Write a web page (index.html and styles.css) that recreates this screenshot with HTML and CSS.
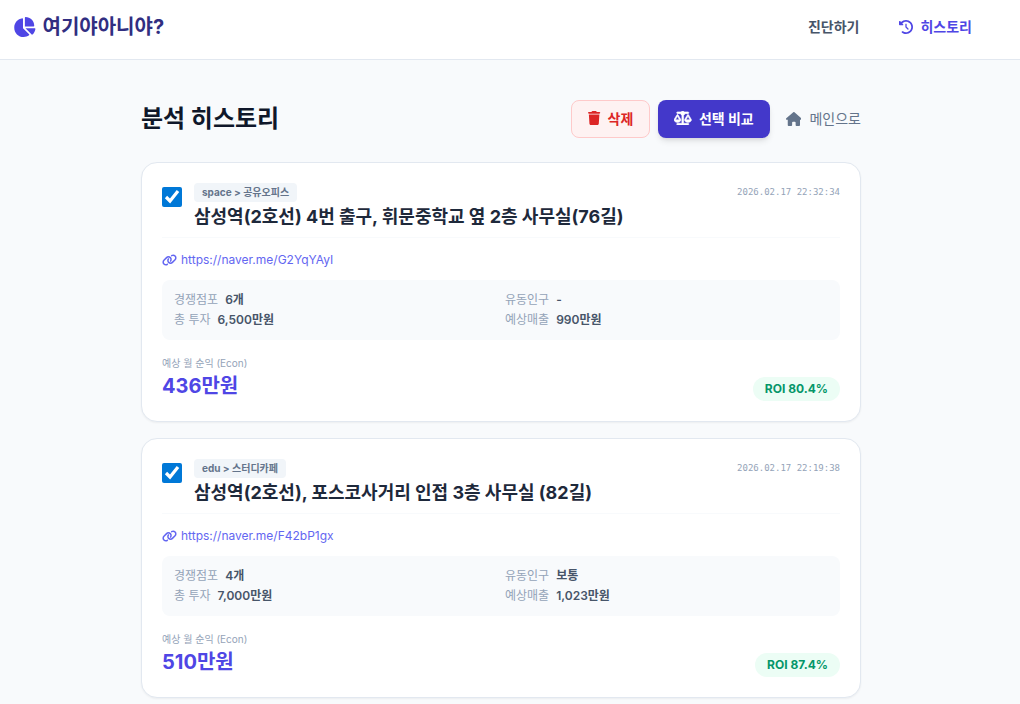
FILE: index.html
```
<!DOCTYPE html>
<html lang="ko">
<head>
    <meta charset="UTF-8">
    <meta name="viewport" content="width=device-width, initial-scale=1.0">
    <title>분석 히스토리 - 여기야아니야?</title>
    <link rel="stylesheet" href="styles.css">
</head>
<body>
    <svg class="sprite" aria-hidden="true">
        <symbol id="icon-link" viewBox="0 0 640 512">
            <path d="M579.8 267.7c56.5-56.5 56.5-148 0-204.5c-50-50-128.8-56.5-186.3-15.4l-1.6 1.1c-14.4 10.3-17.7 30.3-7.4 44.6s30.3 17.7 44.6 7.4l1.6-1.1c32.1-22.9 76-19.3 103.8 8.6c31.5 31.5 31.5 82.5 0 114L422.3 334.8c-31.5 31.5-82.5 31.5-114 0c-27.9-27.9-31.5-71.8-8.6-103.8l1.1-1.6c10.3-14.4 6.9-34.4-7.4-44.6s-34.4-6.9-44.6 7.4l-1.1 1.6C206.5 251.2 213 330 263 380c56.5 56.5 148 56.5 204.5 0L579.8 267.7zM60.2 244.3c-56.5 56.5-56.5 148 0 204.5c50 50 128.8 56.5 186.3 15.4l1.6-1.1c14.4-10.3 17.7-30.3 7.4-44.6s-30.3-17.7-44.6-7.4l-1.6 1.1c-32.1 22.9-76 19.3-103.8-8.6C74 372 74 321 105.5 289.5L217.7 177.2c31.5-31.5 82.5-31.5 114 0c27.9 27.9 31.5 71.8 8.6 103.9l-1.1 1.6c-10.3 14.4-6.9 34.4 7.4 44.6s34.4 6.9 44.6-7.4l1.1-1.6C433.5 260.8 427 182 377 132c-56.5-56.5-148-56.5-204.5 0L60.2 244.3z"/>
        </symbol>
    </svg>

    <header class="header">
        <a class="logo" href="#">
            <svg class="logo-icon" viewBox="0 0 576 512" aria-hidden="true"><path d="M304 240V16.6c0-9 7-16.6 16-16.6C443.7 0 544 100.3 544 224c0 9-7.6 16-16.6 16H304zM32 272C32 150.7 122.1 50.3 239 34.3c9.2-1.3 17 6.1 17 15.4V288L412.5 444.5c6.7 6.7 6.2 17.7-1.5 23.1C371.8 495.6 323.8 512 272 512C139.5 512 32 404.6 32 272zm526.4 16c9.3 0 16.6 7.8 15.4 17c-7.7 55.9-34.6 105.6-73.9 142.3c-6 5.6-15.4 5.2-21.2-.7L320 288H558.4z"/></svg>
            <span>여기야아니야?</span>
        </a>
        <nav class="nav">
            <a class="nav-link" href="#">진단하기</a>
            <a class="nav-link active" href="#">
                <svg class="icon-14" viewBox="0 0 512 512" aria-hidden="true"><path d="M75 75L41 41C25.9 25.9 0 36.6 0 57.9V168c0 13.3 10.7 24 24 24H134.1c21.4 0 32.1-25.9 17-41l-30.8-30.8C155 85.5 203 64 256 64c106 0 192 86 192 192s-86 192-192 192c-40.8 0-78.6-12.7-109.7-34.4c-14.5-10.1-34.4-6.6-44.6 7.9s-6.6 34.4 7.9 44.6C151.2 495 201.7 512 256 512c141.4 0 256-114.6 256-256S397.4 0 256 0C185.3 0 121.3 28.7 75 75zm181 53c-13.3 0-24 10.7-24 24V256c0 6.4 2.5 12.5 7 17l72 72c9.4 9.4 24.6 9.4 33.9 0s9.4-24.6 0-33.9l-65-65V152c0-13.3-10.7-24-24-24z"/></svg>
                히스토리
            </a>
        </nav>
    </header>

    <main class="page">
        <div class="container">
            <div class="toolbar">
                <h1>분석 히스토리</h1>
                <div class="actions">
                    <button class="btn btn-danger" type="button">
                        <svg class="icon-14" viewBox="0 0 448 512" aria-hidden="true"><path d="M135.2 17.7L128 32H32C14.3 32 0 46.3 0 64S14.3 96 32 96H416c17.7 0 32-14.3 32-32s-14.3-32-32-32H320l-7.2-14.3C307.4 6.8 296.3 0 284.2 0H163.8c-12.1 0-23.2 6.8-28.6 17.7zM416 128H32L53.2 467c1.6 25.3 22.6 45 47.9 45H346.9c25.3 0 46.3-19.7 47.9-45L416 128z"/></svg>
                        삭제
                    </button>
                    <button class="btn btn-primary" type="button">
                        <svg class="icon-14 icon-scale" viewBox="0 0 640 512" aria-hidden="true"><path d="M384 32H512c17.7 0 32 14.3 32 32s-14.3 32-32 32H398.4c-5.2 25.8-22.9 47.1-46.4 57.3V448H512c17.7 0 32 14.3 32 32s-14.3 32-32 32H320 128c-17.7 0-32-14.3-32-32s14.3-32 32-32H288V153.3c-23.5-10.3-41.2-31.6-46.4-57.3H128c-17.7 0-32-14.3-32-32s14.3-32 32-32H256c14.6-19.4 37.8-32 64-32s49.4 12.6 64 32zm55.6 288H584.4L512 195.8 439.6 320zM512 416c-62.9 0-115.2-34-126-78.9c-2.6-11 1-22.3 6.7-32.1l95.2-163.2c5-8.6 14.2-13.8 24.1-13.8s19.1 5.3 24.1 13.8l95.2 163.2c5.7 9.8 9.3 21.1 6.7 32.1C627.2 382 574.9 416 512 416zM126.8 195.8L54.4 320H199.3L126.8 195.8zM.9 337.1c-2.6-11 1-22.3 6.7-32.1l95.2-163.2c5-8.6 14.2-13.8 24.1-13.8s19.1 5.3 24.1 13.8l95.2 163.2c5.7 9.8 9.3 21.1 6.7 32.1C242 382 189.7 416 126.8 416S11.7 382 .9 337.1z"/></svg>
                        선택 비교
                    </button>
                    <a class="home-link" href="#">
                        <svg class="icon-14" viewBox="0 0 576 512" aria-hidden="true"><path d="M575.8 255.5c0 18-15 32.1-32 32.1h-32l.7 160.2c0 2.7-.2 5.4-.5 8.1V472c0 22.1-17.9 40-40 40H456c-1.1 0-2.2 0-3.3-.1c-1.4 .1-2.8 .1-4.2 .1H416 392c-22.1 0-40-17.9-40-40V448 384c0-17.7-14.3-32-32-32H256c-17.7 0-32 14.3-32 32v64 24c0 22.1-17.9 40-40 40H160 128.1c-1.5 0-3-.1-4.5-.2c-1.2 .1-2.4 .2-3.6 .2H104c-22.1 0-40-17.9-40-40V360c0-.9 0-1.9 .1-2.8V287.6H32c-18 0-32-14-32-32.1c0-9 3-17 10-24L266.4 8c7-7 15-8 22-8s15 2 21 7L564.8 231.5c8 7 12 15 11 24z"/></svg>
                        메인으로
                    </a>
                </div>
            </div>

            <div class="history-list">
                <article class="card">
                    <div class="card-head">
                        <input class="card-check" type="checkbox" id="item1" checked>
                        <label class="card-label" for="item1">
                            <span class="tag">space &gt; 공유오피스</span>
                            <span class="card-title">삼성역(2호선) 4번 출구, 휘문중학교 옆 2층 사무실(76길)</span>
                        </label>
                        <time class="card-date" datetime="2026-02-17T22:32:34">2026.02.17 22:32:34</time>
                    </div>
                    <a class="card-link" href="#">
                        <svg class="icon-12" aria-hidden="true" viewBox="0 0 640 512"><use href="#icon-link"/></svg>
                        https://naver.me/G2YqYAyI
                    </a>
                    <div class="metrics">
                        <div class="metric"><span>경쟁점포</span><strong>6개</strong></div>
                        <div class="metric"><span>유동인구</span><strong>-</strong></div>
                        <div class="metric"><span>총 투자</span><strong>6,500만원</strong></div>
                        <div class="metric"><span>예상매출</span><strong>990만원</strong></div>
                    </div>
                    <div class="card-foot">
                        <div>
                            <div class="profit-label">예상 월 순익 (Econ)</div>
                            <div class="profit-value">436만원</div>
                        </div>
                        <span class="roi">ROI 80.4%</span>
                    </div>
                </article>

                <article class="card">
                    <div class="card-head">
                        <input class="card-check" type="checkbox" id="item2" checked>
                        <label class="card-label" for="item2">
                            <span class="tag">edu &gt; 스터디카페</span>
                            <span class="card-title">삼성역(2호선), 포스코사거리 인접 3층 사무실 (82길)</span>
                        </label>
                        <time class="card-date" datetime="2026-02-17T22:19:38">2026.02.17 22:19:38</time>
                    </div>
                    <a class="card-link" href="#">
                        <svg class="icon-12" aria-hidden="true" viewBox="0 0 640 512"><use href="#icon-link"/></svg>
                        https://naver.me/F42bP1gx
                    </a>
                    <div class="metrics">
                        <div class="metric"><span>경쟁점포</span><strong>4개</strong></div>
                        <div class="metric"><span>유동인구</span><strong>보통</strong></div>
                        <div class="metric"><span>총 투자</span><strong>7,000만원</strong></div>
                        <div class="metric"><span>예상매출</span><strong>1,023만원</strong></div>
                    </div>
                    <div class="card-foot">
                        <div>
                            <div class="profit-label">예상 월 순익 (Econ)</div>
                            <div class="profit-value">510만원</div>
                        </div>
                        <span class="roi">ROI 87.4%</span>
                    </div>
                </article>
            </div>
        </div>
    </main>
</body>
</html>
```
FILE: styles.css
```
* {
    box-sizing: border-box;
}
body {
    margin: 0;
    font-family: Inter, 'Noto Sans CJK KR', sans-serif;
    background: #f8fafc;
    color: #1e293b;
}
a {
    color: inherit;
    text-decoration: none;
}
svg {
    fill: currentColor;
    flex-shrink: 0;
}
.sprite {
    display: none;
}
.icon-14 {
    height: 14px;
}
.icon-12 {
    height: 12px;
}
.icon-scale {
    stroke: currentColor;
    stroke-width: 20;
}

/* Header */
.header {
    display: flex;
    align-items: center;
    justify-content: space-between;
    height: 60px;
    padding: 0 48px 6px 13px;
    background: white;
    border-bottom: 1px solid #e2e8f0;
}
.logo {
    display: flex;
    align-items: center;
    gap: 7px;
    font-size: 20px;
    font-weight: 700;
    line-height: 28px;
    color: #312e81;
}
.logo-icon {
    height: 20px;
    color: #4f46e5;
}
.nav {
    display: flex;
    gap: 40px;
}
.nav-link {
    display: flex;
    align-items: center;
    gap: 7px;
    font-size: 14px;
    font-weight: 700;
    line-height: 20px;
    color: #475569;
}
.nav-link.active {
    color: #4f46e5;
}

/* Page */
.page {
    padding: 40px 34px 40px 16px;
}
.container {
    max-width: 720px;
    margin: 0 auto;
}
.toolbar {
    display: flex;
    align-items: center;
    justify-content: space-between;
    margin-bottom: 24px;
}
h1 {
    margin: 0;
    font-size: 24px;
    font-weight: 700;
    line-height: 32px;
    color: #0f172a;
}
.actions {
    display: flex;
    align-items: center;
    gap: 8px;
}
.btn {
    display: flex;
    align-items: center;
    gap: 7px;
    height: 38px;
    padding: 0 16px 2px;
    border: 1px solid transparent;
    border-radius: 8px;
    font-family: inherit;
    font-size: 14px;
    font-weight: 700;
    cursor: pointer;
}
.btn-danger {
    background: #fef2f2;
    border-color: #fecaca;
    color: #dc2626;
}
.btn-primary {
    padding: 0 15px 2px;
    background: #4338ca;
    color: white;
    box-shadow: 0 4px 6px -1px rgba(0,0,0,0.1), 0 2px 4px -2px rgba(0,0,0,0.1);
}
.home-link {
    display: flex;
    align-items: center;
    gap: 8px;
    margin-left: 8px;
    font-size: 14px;
    line-height: 20px;
    color: #64748b;
}

/* History cards */
.history-list {
    display: grid;
    gap: 16px;
}
.card {
    padding: 20px;
    background: white;
    border: 1px solid #e2e8f0;
    border-radius: 16px;
    box-shadow: 0 1px 2px rgba(0,0,0,0.05);
}
.card-head {
    display: flex;
    align-items: flex-start;
    gap: 12px;
    padding-bottom: 9px;
    margin-bottom: 12px;
    border-bottom: 1px solid #f8fafc;
}
.card-check {
    width: 20px;
    height: 20px;
    margin: 4px 0 0;
    accent-color: #0078d7;
}
.card-label {
    display: flex;
    flex: 1;
    flex-direction: column;
    align-items: flex-start;
    gap: 3px;
}
.tag {
    padding: 2px 8px;
    border-radius: 4px;
    background: #f1f5f9;
    font-size: 10px;
    font-weight: 700;
    line-height: 15px;
    color: #64748b;
}
.card-title {
    font-size: 18px;
    font-weight: 700;
    line-height: 23px;
}
.card-date {
    font-family: 'DejaVu Sans Mono', monospace;
    font-size: 9px;
    line-height: 19px;
    color: #94a3b8;
}
.card-link {
    display: flex;
    align-items: center;
    gap: 4px;
    margin-bottom: 11px;
    font-size: 12px;
    line-height: 19px;
    color: #6366f1;
}
.metrics {
    display: grid;
    grid-template-columns: 1fr 1fr;
    gap: 4px 8px;
    padding: 12px;
    margin-bottom: 16px;
    border-radius: 8px;
    background: #f8fafc;
    font-size: 12px;
    line-height: 16px;
}
.metric {
    display: flex;
    gap: 7px;
}
.metric span {
    color: #94a3b8;
}
.metric strong {
    font-weight: 600;
    color: #475569;
}
.card-foot {
    display: flex;
    align-items: flex-end;
    justify-content: space-between;
}
.profit-label {
    font-size: 10px;
    line-height: 15px;
    color: #94a3b8;
}
.profit-value {
    font-size: 20px;
    font-weight: 700;
    line-height: 30px;
    color: #4f46e5;
}
.roi {
    padding: 4px 12px;
    border-radius: 12px;
    background: #ecfdf5;
    font-size: 12px;
    font-weight: 700;
    line-height: 16px;
    color: #059669;
}
```
